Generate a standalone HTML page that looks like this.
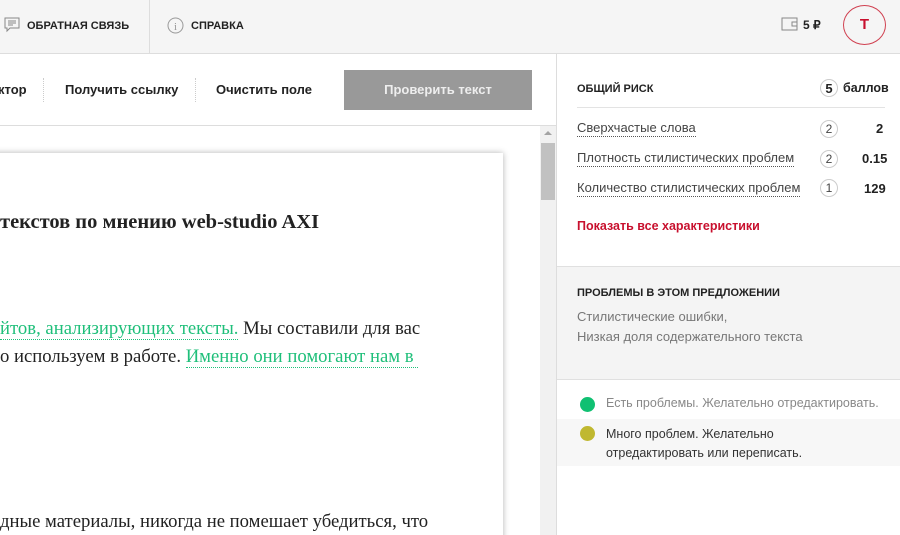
<!DOCTYPE html>
<html><head><meta charset="utf-8"><style>
*{margin:0;padding:0;box-sizing:border-box}
html,body{width:900px;height:535px;overflow:hidden}
body{background:#fff;font-family:"Liberation Sans",sans-serif;color:#222;position:relative}
.top{position:absolute;left:0;top:0;width:900px;height:54px;background:#f5f5f5;border-bottom:1px solid #ddd}
.abs{position:absolute;white-space:nowrap}
.cap{font-size:11px;font-weight:bold;letter-spacing:0;color:#222}
.tb{font-size:13px;font-weight:bold;color:#222}
.serif{font-family:"Liberation Serif",serif;font-size:18.7px;color:#222}
.g{color:#1fbf7a;border-bottom:1px dotted #1fbf7a}
.lnk{font-size:13px;color:#444;border-bottom:1px dotted #555;padding-bottom:1px}
.circ{position:absolute;width:18px;height:18px;border:1px solid #ccc;border-radius:50%;font-size:12px;text-align:center;line-height:17px;color:#444}
</style></head><body>
<div class="top"></div>
<div class="abs" style="left:149px;top:0;width:1px;height:53px;background:#ddd"></div>
<svg class="abs" style="left:4px;top:17px" width="16" height="16" viewBox="0 0 16 16"><path d="M1 1h14v10H6l-3 3v-3H1z" fill="none" stroke="#888"/><path d="M4 4h8M4 6h8M4 8h5" stroke="#888"/></svg>
<div class="abs cap" style="left:27px;top:20px">ОБРАТНАЯ СВЯЗЬ</div>
<svg class="abs" style="left:167px;top:17px" width="17" height="17"><circle cx="8.5" cy="8.5" r="7.5" fill="none" stroke="#999"/><text x="8.5" y="13" font-size="11" text-anchor="middle" fill="#999" font-family="Liberation Serif">i</text></svg>
<div class="abs cap" style="left:191px;top:20px">СПРАВКА</div>
<svg class="abs" style="left:781px;top:17px" width="17" height="14"><rect x="1" y="1" width="15" height="12" fill="none" stroke="#888"/><path d="M11 5h5v4h-5z" fill="none" stroke="#888"/></svg>
<div class="abs tb" style="left:803px;top:18px;font-size:12px">5 ₽</div>
<div class="abs" style="left:843px;top:5px;width:43px;height:40px;border:1px solid #d04050;border-radius:50%;text-align:center;line-height:38px;color:#c8102e;font-size:15px;font-weight:bold">Т</div>

<div class="abs" style="left:0;top:125px;width:556px;height:1px;background:#ddd"></div>
<div class="abs tb" style="left:-2px;top:82px">ктор</div>
<div class="abs" style="left:43px;top:78px;height:24px;border-left:1px dotted #ccc"></div>
<div class="abs tb" style="left:65px;top:82px">Получить ссылку</div>
<div class="abs" style="left:195px;top:78px;height:24px;border-left:1px dotted #ccc"></div>
<div class="abs tb" style="left:216px;top:82px">Очистить поле</div>
<div class="abs tb" style="left:344px;top:70px;width:188px;height:40px;background:#999;color:#eee;text-align:center;line-height:40px">Проверить текст</div>

<div class="abs" style="left:-10px;top:153px;width:513px;height:390px;background:#fff;box-shadow:0 0 6px rgba(0,0,0,.3)"></div>
<div class="abs serif" style="left:0;top:211px;font-weight:bold;font-size:20.5px">текстов по мнению web-studio AXI</div>
<div class="abs serif" style="left:0;top:318px"><span class="g">йтов, анализирующих тексты.</span> Мы составили для вас</div>
<div class="abs serif" style="left:0;top:346px">о используем в работе. <span class="g">Именно они помогают нам в&nbsp;</span></div>
<div class="abs serif" style="left:0;top:511px">дные материалы, никогда не помешает убедиться, что</div>
<div class="abs" style="left:540px;top:126px;width:16px;height:409px;background:#f1f1f1"></div>
<div class="abs" style="left:541px;top:143px;width:14px;height:57px;background:#c1c1c1"></div>
<div class="abs" style="left:544px;top:131px;width:0;height:0;border-left:4px solid transparent;border-right:4px solid transparent;border-bottom:4px solid #a3a3a3"></div>
<div class="abs" style="left:556px;top:54px;width:1px;height:481px;background:#ddd"></div>

<div class="abs cap" style="left:577px;top:83px">ОБЩИЙ РИСК</div>
<div class="circ" style="left:820px;top:79px;color:#222;font-weight:bold;font-size:13px">5</div>
<div class="abs tb" style="left:843px;top:81px;font-size:12.5px">баллов</div>
<div class="abs" style="left:577px;top:107px;width:308px;height:1px;background:#e3e3e3"></div>
<div class="abs lnk" style="left:577px;top:120px">Сверхчастые слова</div>
<div class="circ" style="left:820px;top:120px">2</div>
<div class="abs tb" style="left:876px;top:121px">2</div>
<div class="abs lnk" style="left:577px;top:150px">Плотность стилистических проблем</div>
<div class="circ" style="left:820px;top:150px">2</div>
<div class="abs tb" style="left:862px;top:151px">0.15</div>
<div class="abs lnk" style="left:577px;top:180px">Количество стилистических проблем</div>
<div class="circ" style="left:820px;top:179px">1</div>
<div class="abs tb" style="left:864px;top:181px">129</div>
<div class="abs" style="left:577px;top:219px;font-size:12.5px;font-weight:bold;color:#c8102e">Показать все характеристики</div>

<div class="abs" style="left:557px;top:266px;width:343px;height:114px;background:#f4f4f4;border-top:1px solid #e0e0e0;border-bottom:1px solid #e0e0e0"></div>
<div class="abs cap" style="left:577px;top:287px">ПРОБЛЕМЫ В ЭТОМ ПРЕДЛОЖЕНИИ</div>
<div class="abs" style="left:577px;top:307px;font-size:13px;color:#777;line-height:20px">Стилистические ошибки,<br>Низкая доля содержательного текста</div>

<div class="abs" style="left:580px;top:397px;width:15px;height:15px;border-radius:50%;background:#10c072"></div>
<div class="abs" style="left:606px;top:396px;font-size:12.5px;color:#888">Есть проблемы. Желательно отредактировать.</div>
<div class="abs" style="left:557px;top:419px;width:343px;height:47px;background:#f7f7f7"></div>
<div class="abs" style="left:580px;top:426px;width:15px;height:15px;border-radius:50%;background:#c0b830"></div>
<div class="abs" style="left:606px;top:425px;font-size:12.5px;color:#333;line-height:19px">Много проблем. Желательно<br>отредактировать или переписать.</div>
</body></html>
